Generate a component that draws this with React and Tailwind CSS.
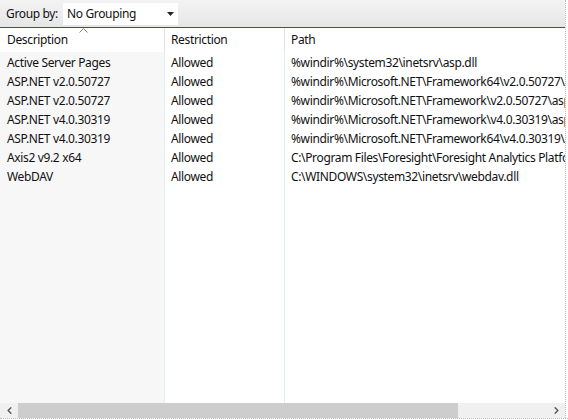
import { ChevronLeft, ChevronRight } from "lucide-react";

const rows = [
  { desc: "Active Server Pages", restriction: "Allowed", path: "%windir%\\system32\\inetsrv\\asp.dll" },
  { desc: "ASP.NET v2.0.50727", restriction: "Allowed", path: "%windir%\\Microsoft.NET\\Framework64\\v2.0.50727\\aspnet_isapi.dll" },
  { desc: "ASP.NET v2.0.50727", restriction: "Allowed", path: "%windir%\\Microsoft.NET\\Framework\\v2.0.50727\\aspnet_isapi.dll" },
  { desc: "ASP.NET v4.0.30319", restriction: "Allowed", path: "%windir%\\Microsoft.NET\\Framework\\v4.0.30319\\aspnet_isapi.dll" },
  { desc: "ASP.NET v4.0.30319", restriction: "Allowed", path: "%windir%\\Microsoft.NET\\Framework64\\v4.0.30319\\aspnet_isapi.dll" },
  { desc: "Axis2 v9.2 x64", restriction: "Allowed", path: "C:\\Program Files\\Foresight\\Foresight Analytics Platform\\isapi.dll" },
  { desc: "WebDAV", restriction: "Allowed", path: "C:\\WINDOWS\\system32\\inetsrv\\webdav.dll" },
];

export default function App() {
  return (
    <div
      className="w-[568px] h-[420px] bg-white flex flex-col overflow-hidden text-[12px] tracking-[-0.35px] text-[#111]"
      style={{ fontFamily: '"Noto Sans", "Open Sans", sans-serif' }}
    >
      <div className="w-[566px] flex flex-col flex-1 border-r border-dotted border-[#bbb]">
        {/* toolbar */}
        <div className="h-[28px] flex items-center pl-[6px] gap-[5px] bg-gradient-to-b from-[#f3f3f3] to-[#e6e6e6] border-b border-[#4b4b6b]">
          <span>Group by:</span>
          <div className="w-[115px] h-[22px] bg-white flex items-center justify-between pl-[4px] pr-[4px]">
            <span>No Grouping</span>
            <svg width="7" height="4" viewBox="0 0 7 4">
              <path d="M0 0 L7 0 L3.5 4 Z" fill="#222" />
            </svg>
          </div>
        </div>

        {/* header */}
        <div className="h-[24px] flex relative">
          <div className="w-[165px] pl-[7px] flex items-center border-r border-[#e5e5e5]">Description</div>
          <div className="w-[120px] pl-[6px] flex items-center border-r border-[#e5e5e5]">Restriction</div>
          <div className="flex-1 pl-[6px] flex items-center">Path</div>
          <svg className="absolute left-[79px] top-[0px]" width="9" height="5" viewBox="0 0 9 5">
            <path d="M0.5 4.5 L4.5 0.5 L8.5 4.5" fill="none" stroke="#888" strokeWidth="1" />
          </svg>
        </div>

        {/* body */}
        <div className="flex-1 flex overflow-hidden">
          <div className="w-[165px] shrink-0 bg-[#f7f7f7] border-r border-[#e3eef3] pt-[1px]">
            {rows.map((r, i) => (
              <div key={i} className="h-[19px] pl-[7px] flex items-center whitespace-nowrap">{r.desc}</div>
            ))}
          </div>
          <div className="w-[120px] shrink-0 border-r border-[#e3eef3] pt-[1px]">
            {rows.map((r, i) => (
              <div key={i} className="h-[19px] pl-[6px] flex items-center whitespace-nowrap">{r.restriction}</div>
            ))}
          </div>
          <div className="flex-1 overflow-hidden pt-[1px]">
            {rows.map((r, i) => (
              <div key={i} className="h-[19px] pl-[6px] flex items-center whitespace-nowrap">{r.path}</div>
            ))}
          </div>
        </div>

        {/* horizontal scrollbar */}
        <div className="h-[15px] flex bg-[#f0f0f0]">
          <div className="w-[18px] flex items-center justify-center">
            <ChevronLeft size={11} strokeWidth={3} color="#555" />
          </div>
          <div className="w-[440px] bg-[#cdcdcd]" />
          <div className="flex-1" />
          <div className="w-[18px] flex items-center justify-center">
            <ChevronRight size={11} strokeWidth={3} color="#555" />
          </div>
        </div>
      </div>
      <div className="h-[2px] border-t border-dotted border-[#bbb]" />
    </div>
  );
}
